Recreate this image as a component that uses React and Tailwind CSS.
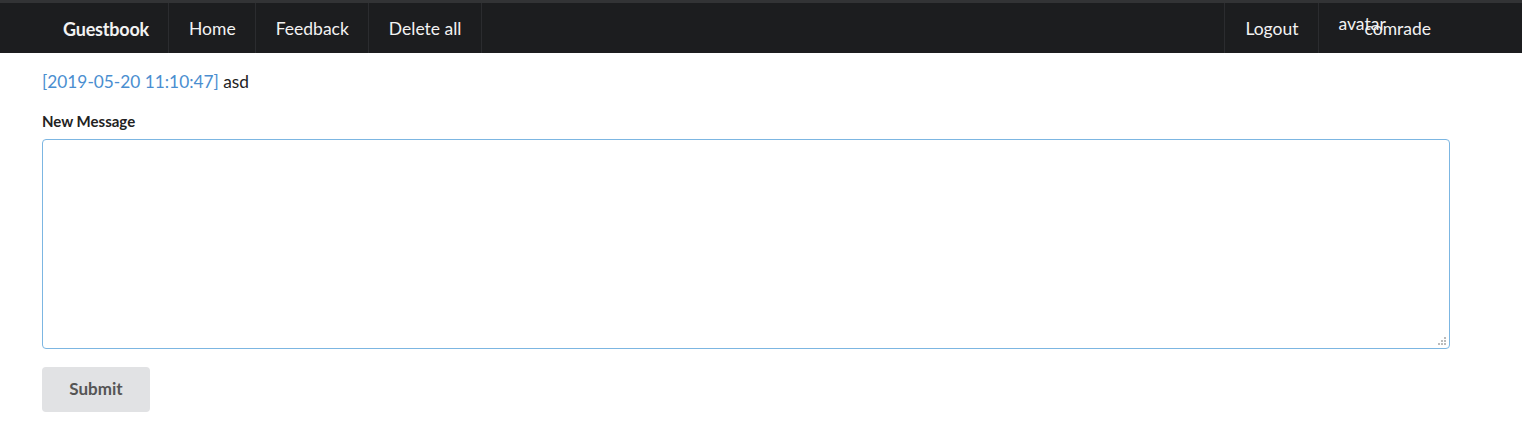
import React from 'react';

const NavItem = ({ children, className = '' }) => (
  <a href="#" className={`flex items-center pt-[3px] pl-5 pr-[19px] text-[17.5px] text-[#f2f2f2] border-l border-[#2b2c2f] ${className}`}>
    {children}
  </a>
);

const Grip = () => (
  <div className="pointer-events-none absolute right-[4px] bottom-[4px] grid grid-cols-3 gap-[1px]">
    <span className="w-[2px] h-[2px]" />
    <span className="w-[2px] h-[2px]" />
    <span className="w-[2px] h-[2px] bg-[#bbb]" />
    <span className="w-[2px] h-[2px]" />
    <span className="w-[2px] h-[2px] bg-[#bbb]" />
    <span className="w-[2px] h-[2px] bg-[#bbb]" />
    <span className="w-[2px] h-[2px] bg-[#bbb]" />
    <span className="w-[2px] h-[2px] bg-[#bbb]" />
    <span className="w-[2px] h-[2px] bg-[#bbb]" />
  </div>
);

const App = () => {
  return (
    <div className="min-h-screen bg-white font-['Lato','Open_Sans',sans-serif] text-[#222]">
      <nav className="bg-[#1c1d1f] border-t-[3px] border-[#323335] h-[53px]">
        <div className="ml-[42px] mr-[71px] flex h-full">
          <a href="#" className="flex items-center pt-[3px] pl-[21px] pr-[19px] text-[18px] font-bold text-[#f2f2f2] tracking-[-0.2px]">Guestbook</a>
          <NavItem>Home</NavItem>
          <NavItem>Feedback</NavItem>
          <NavItem className="border-r">Delete all</NavItem>
          <div className="flex-1" />
          <NavItem>Logout</NavItem>
          <a href="#" className="relative flex items-center pt-[3px] pl-[46px] pr-5 text-[17.5px] text-[#f2f2f2] border-l border-[#2b2c2f]">
            <span className="absolute left-5 top-[8px] text-[17.5px] text-[#f2f2f2]">avatar</span>
            <span className="relative">comrade</span>
          </a>
        </div>
      </nav>

      <main className="ml-[42px] mr-[72px] pt-[16px]">
        <p className="text-[17.3px] leading-[26px]">
          <a href="#" className="text-[#4a8ed0]">[2019-05-20 11:10:47]</a> asd
        </p>

        <form className="mt-[15px]">
          <label className="block text-[15px] font-bold text-[#222] mb-[6px]">New Message</label>
          <div className="relative">
            <textarea className="block w-full h-[210px] rounded-[4px] border border-[#7cb6e2] outline-none resize-none p-3 text-[17px]" />
            <Grip />
          </div>
          <button type="button" className="mt-[18px] w-[108px] h-[45px] rounded-[4px] bg-[#e1e2e4] text-[#555] text-[17px] font-bold">
            Submit
          </button>
        </form>
      </main>
    </div>
  );
};

export default App;
